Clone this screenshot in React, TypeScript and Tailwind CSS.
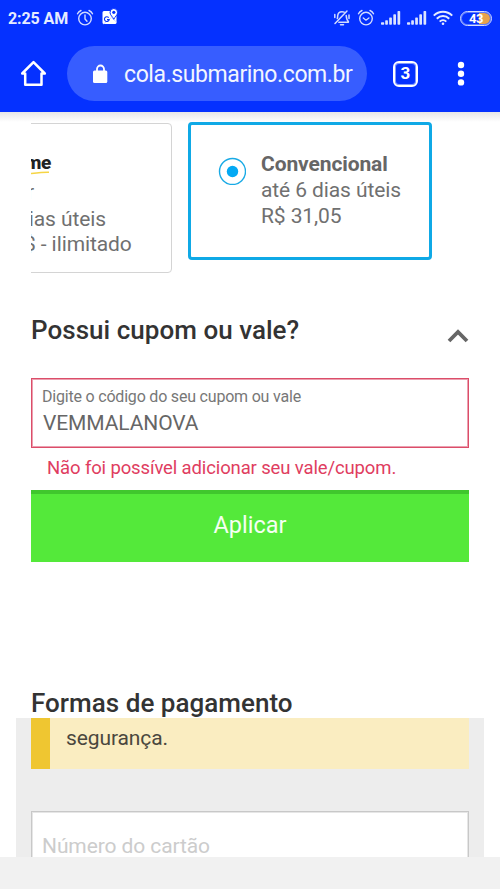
import type { ReactNode } from 'react';

function AlarmIcon({ check = false }: { check?: boolean }) {
  return (
    <svg width="18" height="18" viewBox="0 0 18 18" fill="none" stroke="#d3dcff" strokeWidth="1.4" strokeLinecap="round">
      <circle cx="9" cy="9.6" r="6.3" />
      <path d="M1.5 4.8C2.2 3.2 3.4 2.1 5 1.5M16.5 4.8C15.8 3.2 14.6 2.1 13 1.5" />
      <path d={check ? 'M6.3 9l2.7 2.2L11.9 9' : 'M9 6v4l2 2.3'} />
    </svg>
  );
}

function MapsIcon() {
  return (
    <svg width="16" height="18" viewBox="0 0 16 18">
      <path d="M2 3h12.500v11.500a1.500 1.500 0 0 1-1.500 1.500H2a1.500 1.500 0 0 1-1.500-1.500v-10A1.500 1.500 0 0 1 2 3z" fill="#fff" />
      <path d="M1.500 16L9.500 9.500L15 14.500" fill="none" stroke="#b4c3ff" strokeWidth=".7" />
      <path d="M6.700 9.600a2.400 2.400 0 1 0 .5 2H5" fill="none" stroke="#0b35f5" strokeWidth="1.100" />
      <path d="M11.800 11.300C10.800 8.700 8 7.300 8 4.300a3.800 3.800 0 0 1 7.600 0c0 3-2.800 4.400-3.800 7z" fill="#fff" stroke="#0531ff" strokeWidth="1" />
      <circle cx="11.800" cy="4.300" r="1.600" fill="#0531ff" />
    </svg>
  );
}

function MuteIcon() {
  return (
    <svg width="18" height="18" viewBox="0 0 18 18" fill="none" stroke="#d3dcff" strokeWidth="1.5" strokeLinecap="round" strokeLinejoin="round">
      <path d="M4.300 9.500C4.700 8.700 4.600 7.800 4.700 6.800C4.900 4 6.500 2.700 9 2.700C9.800 2.700 10.600 2.900 11.200 3.200" />
      <path d="M13.200 6.500C13.400 9.500 13.600 11 15.400 12.500V13.300H5.800" />
      <path d="M14 2L2 14.500M7.500 15.800h3M1.800 5.500v3M16 6v3.500" />
    </svg>
  );
}

function SignalIcon() {
  return (
    <svg width="20" height="16" viewBox="0 0 20 16" fill="#dce4ff">
      <rect x="0" y="12.300" width="3.200" height="2.400" rx=".7" />
      <rect x="4.200" y="10.200" width="2.700" height="4.500" rx=".7" />
      <rect x="8.200" y="7.400" width="2.700" height="7.300" rx=".7" />
      <rect x="12.300" y="4.300" width="2.700" height="10.400" rx=".7" />
      <rect x="16.500" y="1" width="2.700" height="13.700" rx=".7" />
    </svg>
  );
}

function WifiIcon() {
  return (
    <svg width="20" height="16" viewBox="0 0 20 16" fill="none" stroke="#e6ecff" strokeWidth="2">
      <path d="M.8 5.600C6 .4 14 .4 19.200 5.600M3.800 8.700c3.500-3.500 8.900-3.500 12.400 0M6.700 11.600c1.900-1.900 4.700-1.900 6.600 0" />
      <circle cx="10" cy="13.700" r="1.300" fill="#e6ecff" stroke="none" />
    </svg>
  );
}

function StatusBar() {
  return (
    <div className="flex h-9 items-center pr-[8px] pl-[8px]">
      <span className="w-[68px] pt-px text-[16px] font-bold tracking-[-0.1px] whitespace-nowrap text-[#e6ecff]">2:25 AM</span>
      <AlarmIcon />
      <div className="ml-[8px] -mt-[3px]">
        <MapsIcon />
      </div>
      <div className="ml-auto flex items-center">
        <MuteIcon />
        <div className="ml-[6px]">
          <AlarmIcon check />
        </div>
        <div className="ml-[6px]">
          <SignalIcon />
        </div>
        <div className="ml-[6px]">
          <SignalIcon />
        </div>
        <div className="ml-[6px]">
          <WifiIcon />
        </div>
        <div className="ml-[7px] flex h-[15px] w-8 items-center justify-center rounded-full border border-[#d5ddff] p-px shadow-[inset_0_0_0_1px_#5f7dff]">
          <div className="flex h-full w-full items-center justify-center rounded-full bg-[linear-gradient(90deg,transparent_62%,#e8a34d_62%)]">
            <span className="text-[13px] leading-none font-bold tracking-[-0.5px] text-white">43</span>
          </div>
        </div>
      </div>
    </div>
  );
}

function Toolbar() {
  return (
    <div className="flex h-[76px] items-start pt-[10px]">
      <svg className="mt-[14px] ml-[20px]" width="27" height="28" viewBox="0 0 27 28" fill="none" stroke="#fff" strokeWidth="2.500" strokeLinejoin="round">
        <path d="M2.200 13.500L13.500 2.200L24.800 13.500H21.500V24.700H5.200V13.500z" />
      </svg>
      <div className="ml-[20px] flex h-[55px] w-[300px] items-center rounded-full bg-[#375dff] pl-[26px] text-[23px] text-[#f2f5ff]">
        <svg width="15" height="20" viewBox="0 0 15 20">
          <path d="M4 8V5a3.500 3.500 0 0 1 7 0v3" fill="none" stroke="#fff" strokeWidth="1.800" />
          <rect x="0" y="6.500" width="14.300" height="12.500" rx="1.500" fill="#fff" />
        </svg>
        <span className="ml-[16px] pt-[3px] tracking-[-0.4px] whitespace-nowrap">cola.submarino.com.br</span>
      </div>
      <div className="mt-[15px] ml-[26px] flex h-[26px] w-[25px] items-center justify-center rounded-[6px] border-2 border-white text-[17px] font-bold text-white shadow-[inset_0_0_0_1px_#829aff]">
        3
      </div>
      <svg className="mt-[15px] ml-[39px]" width="8" height="26" viewBox="0 0 8 26" fill="#fff">
        <circle cx="4" cy="4" r="3.200" />
        <circle cx="4" cy="12.700" r="3.200" />
        <circle cx="4" cy="21.400" r="3.200" />
      </svg>
    </div>
  );
}

function ShippingOptions() {
  return (
    <div className="flex h-[152px] items-start overflow-hidden pt-[1px]">
      <div className="-ml-[10px] h-[150px] w-[151px] rounded-[4px] border border-[#d4d4d4]">
        <div className="mt-[27px] ml-[3px] h-[25px] text-[19px] leading-[23px] font-extrabold tracking-[-0.5px] text-[#222]">
          <span className="block">me</span>
          <svg className="-mt-[3px] ml-[6px] block" width="24" height="4" viewBox="0 0 24 4" fill="none">
            <path d="M0 2.500C7 1.700 13 1 18 1.200" stroke="#f6d544" strokeWidth="1.400" />
          </svg>
        </div>
        <div className="mt-[3px] ml-[6px] text-[21px] leading-[26px] tracking-[-0.1px] whitespace-nowrap text-[#707070]">
          <p className="-ml-[1px] text-[#666]">r</p>
          <p className="-ml-[11px] pt-px">dias úteis</p>
          <p className="-mt-px -ml-[4px]">$ - ilimitado</p>
        </div>
      </div>
      <div className="-mt-[1px] ml-[16px] flex h-[138px] w-[244px] rounded-[4px] border-[3px] border-[#0fa9e6] pt-[26px] pl-[27px]">
        <svg className="mt-[6px]" width="28" height="28" viewBox="0 0 28 28">
          <circle cx="14.500" cy="14.500" r="13" fill="none" stroke="#19aae5" strokeWidth="1.400" />
          <circle cx="14.500" cy="14.500" r="5.700" fill="#03a9f4" />
        </svg>
        <div className="ml-[15px] text-[21px] leading-[26px] tracking-[-0.1px] whitespace-nowrap text-[#707070]">
          <p className="font-bold text-[#666]">Convencional</p>
          <p>até 6 dias úteis</p>
          <p>R$ 31,05</p>
        </div>
      </div>
    </div>
  );
}

function SectionTitle({ children }: { children: ReactNode }) {
  return <h2 className="text-[26px] leading-[32px] font-medium tracking-[0.03px] whitespace-nowrap text-[#333]">{children}</h2>;
}

function Coupon() {
  return (
    <section className="mt-[40px]">
      <div className="flex justify-between">
        <SectionTitle>Possui cupom ou vale?</SectionTitle>
        <svg className="mt-[14px]" width="22" height="15" viewBox="0 0 22 15" fill="none" stroke="#666" strokeWidth="3.800">
          <path d="M2 13L11 4L20 13" />
        </svg>
      </div>
      <div className="mt-[32px] h-[70px] border border-[#dc4d69] pt-[8px] pl-[10px] shadow-[inset_0_0_0_1px_#eba0b0]">
        <div className="text-[16px] leading-[20px] tracking-[-0.2px] text-[#777]">Digite o código do seu cupom ou vale</div>
        <div className="mt-[3px] ml-[1px] text-[21px] leading-[26px] tracking-[-0.1px] text-[#666]">VEMMALANOVA</div>
      </div>
      <p className="mt-[8px] ml-[16px] text-[18.500px] leading-[24px] tracking-[-0.13px] whitespace-nowrap text-[#e03d5f]">
        Não foi possível adicionar seu vale/cupom.
      </p>
      <button className="mt-[10px] block h-[72px] w-full border-t-4 border-[#40c72d] bg-[#54e93a] pb-[5px] text-[23.500px] text-[#f4fff2]">
        Aplicar
      </button>
    </section>
  );
}

function Payment() {
  return (
    <section className="mt-[125px]">
      <SectionTitle>Formas de pagamento</SectionTitle>
      <div className="-mx-[15px] -mt-px h-[139px] overflow-hidden bg-[#ededed] px-[15px]">
        <div className="h-[51px] border-l-[19px] border-[#efc631] bg-[#faedc1] pt-[7px] pl-[16px] text-[21px] leading-[26px] tracking-[-0.1px] text-[#4a473e]">
          segurança.
        </div>
        <div className="mt-[42px] h-[70px] border border-[#c8c8c8] bg-white pt-[21px] pl-[10px] text-[21px] leading-[26px] tracking-[-0.1px] text-[#ccc] shadow-[inset_0_0_0_1px_#e6e6e6]">
          Número do cartão
        </div>
      </div>
    </section>
  );
}

export default function App() {
  return (
    <div className="h-[889px] w-[500px] overflow-hidden bg-white font-['Roboto',sans-serif]">
      <header className="h-[112px] bg-[#0531ff]">
        <StatusBar />
        <Toolbar />
      </header>
      <div className="h-[10px] bg-linear-to-b from-[#e6e6e8] to-white" />
      <main className="mr-[31px] ml-[31px] h-[735px]">
        <ShippingOptions />
        <Coupon />
        <Payment />
      </main>
      <div className="h-[32px] bg-[#f1f1f1]" />
    </div>
  );
}
